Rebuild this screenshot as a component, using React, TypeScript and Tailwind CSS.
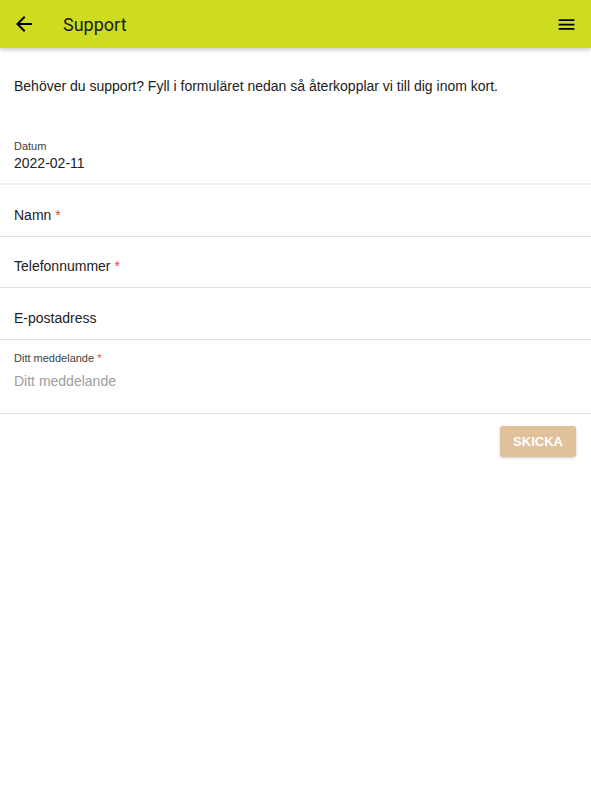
const sans = { fontFamily: '"Liberation Sans", Arial, sans-serif' };

function BackIcon() {
  return (
    <svg width="24" height="24" viewBox="0 0 24 24" fill="currentColor">
      <path d="M20 11H7.83l5.59-5.59L12 4l-8 8 8 8 1.41-1.41L7.83 13H20v-2z" />
    </svg>
  );
}

function MenuIcon() {
  return (
    <svg width="21" height="21" viewBox="0 0 24 24" fill="currentColor">
      <path d="M3 18h18v-2H3v2zm0-5h18v-2H3v2zm0-7v2h18V6H3z" />
    </svg>
  );
}

function Field({ label, required, short }: { label: string; required?: boolean; short?: boolean }) {
  return (
    <div className={`${short ? 'h-[51px]' : 'h-[52px]'} border-b border-[#e0e0e0] flex items-center px-[14px] pt-[9px]`}>
      <span className="text-[14px] text-[#212121]">
        {label}
        {required && <span className="text-[#f44336]"> *</span>}
      </span>
    </div>
  );
}

export default function App() {
  return (
    <div className="min-h-[800px] bg-white" style={sans}>
      <header className="h-[48px] bg-[#cddc21] flex items-center pl-[12px] pr-[14px] shadow-[0_2px_4px_rgba(0,0,0,0.2)]">
        <span className="text-black">
          <BackIcon />
        </span>
        <span className="ml-[27px] text-[18px] text-[#1b1b1b]" style={{ fontFamily: 'Roboto, sans-serif' }}>
          Support
        </span>
        <span className="ml-auto text-black">
          <MenuIcon />
        </span>
      </header>

      <p className="px-[14px] pt-[28px] text-[14px] leading-[21px] text-[#212121]">
        Behöver du support? Fyll i formuläret nedan så återkopplar vi till dig inom kort.
      </p>

      <div className="mt-[36px]">
        <div className="h-[52px] border-b-2 border-[#eeeeee] px-[14px] pt-[7px]">
          <div className="text-[11px] text-[#424242] leading-[13px]">Datum</div>
          <div className="text-[14px] text-[#212121] leading-[16px] mt-[2px]">2022-02-11</div>
        </div>
        <Field label="Namn" required />
        <Field label="Telefonnummer" required short />
        <Field label="E-postadress" />
        <div className="h-[74px] border-b border-[#e0e0e0] px-[14px] pt-[12px]">
          <div className="text-[11px] text-[#424242] leading-[13px]">
            Ditt meddelande<span className="text-[#f44336]"> *</span>
          </div>
          <div className="text-[14px] text-[#9e9e9e] mt-[6px]">Ditt meddelande</div>
        </div>
      </div>

      <div className="flex justify-end px-[15px] pt-[12px]">
        <button className="h-[31px] w-[76px] rounded-[3px] bg-[#e0c19b] text-white text-[13px] font-bold shadow-[0_1px_3px_rgba(0,0,0,0.2)]">
          SKICKA
        </button>
      </div>
    </div>
  );
}
